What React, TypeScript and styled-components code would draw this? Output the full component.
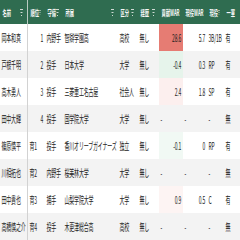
import styled, { createGlobalStyle } from "styled-components";

const GlobalStyle = createGlobalStyle`
    html, body {
        margin: 0;
        padding: 0;
        background: #fff;
        overflow: hidden;
    }
    body {
        font-family: "Noto Sans CJK JP", "Noto Sans", sans-serif;
    }
`;

// widths are drawn at 2x and squeezed back by the sheet's scaleX
const COLS = "56px 34px 36px 110px 40px 42px 48px 48px 34px 32px";

const Sheet = styled.div`
    width: 480px;
    transform: scaleX(0.5);
    transform-origin: 0 0;
`;

const HeaderRow = styled.div`
    display: grid;
    grid-template-columns: ${COLS};
    height: 24px;
    background: #2f6c50;
    color: #f7f7f7;
    font-size: 8.5px;
    font-weight: 700;
`;

const HeadCell = styled.div<{ $first?: boolean }>`
    display: flex;
    align-items: center;
    justify-content: space-between;
    padding: 0 8px 0 5px;
    overflow: hidden;
    white-space: nowrap;
    border-right: ${(p) => (p.$first ? "2px solid #b9cbc1" : "none")};
`;

const Row = styled.div<{ $even: boolean }>`
    display: grid;
    grid-template-columns: ${COLS};
    height: 27px;
    background: ${(p) => (p.$even ? "#f3f3f3" : "#fff")};
    color: #222;
    font-size: 10px;
    letter-spacing: -0.4px;
`;

const Cell = styled.div<{ $right?: boolean; $bg?: string; $first?: boolean }>`
    display: flex;
    align-items: center;
    justify-content: ${(p) => (p.$right ? "flex-end" : "flex-start")};
    padding: 0 4px 0 3px;
    overflow: hidden;
    white-space: nowrap;
    background: ${(p) => p.$bg || "transparent"};
    border-right: ${(p) => (p.$first ? "2px solid #d2d2d2" : "none")};
`;

const FilterIcon = () => (
    <svg width="6" height="8" viewBox="0 0 6 8">
        <rect x="0" y="1" width="6" height="1" fill="#cfd9d3" />
        <rect x="1" y="4" width="4" height="1" fill="#cfd9d3" />
        <rect x="2" y="7" width="2" height="1" fill="#cfd9d3" />
    </svg>
);

const headers = ["名前", "順位", "守備", "所属", "区分", "経歴", "貢献WAR", "現役WAR", "現役", "一軍"];

type Pick = {
    name: string;
    rank: number | string;
    pos: string;
    team: string;
    kind: string;
    career: string;
    war: number | "-";
    warColor?: string;
    activeWar: number | "-";
    role: string;
    first: string;
};

const picks: Pick[] = [
    { name: "岡本和真", rank: 1, pos: "内野手", team: "智辯学園高", kind: "高校", career: "無し", war: 28.6, warColor: "#e67c73", activeWar: 5.7, role: "3B/1B", first: "有" },
    { name: "戸根千明", rank: 2, pos: "投手", team: "日本大学", kind: "大学", career: "無し", war: -0.4, warColor: "#e6f4eb", activeWar: 0.3, role: "RP", first: "有" },
    { name: "高木勇人", rank: 3, pos: "投手", team: "三菱重工名古屋", kind: "社会人", career: "無し", war: 2.4, warColor: "#fcefee", activeWar: 1.8, role: "SP", first: "有" },
    { name: "田中大輝", rank: 4, pos: "投手", team: "国学院大学", kind: "大学", career: "無し", war: "-", activeWar: "-", role: "-", first: "無" },
    { name: "篠原慎平", rank: "育1", pos: "投手", team: "香川オリーブガイナーズ", kind: "独立", career: "無し", war: -0.1, warColor: "#f1f9f4", activeWar: 0, role: "RP", first: "有" },
    { name: "川相拓也", rank: "育2", pos: "内野手", team: "桜美林大学", kind: "大学", career: "無し", war: "-", activeWar: "-", role: "-", first: "無" },
    { name: "田中貴也", rank: "育3", pos: "捕手", team: "山梨学院大学", kind: "大学", career: "無し", war: 0.9, warColor: "#fdf4f3", activeWar: 0.5, role: "C", first: "有" },
    { name: "高橋慎之介", rank: "育4", pos: "投手", team: "木更津総合高", kind: "高校", career: "無し", war: "-", activeWar: "-", role: "-", first: "無" },
];

export default function App() {
    return (
        <>
            <GlobalStyle />
            <Sheet>
                <HeaderRow>
                    {headers.map((h, i) => (
                        <HeadCell key={h} $first={i === 0}>
                            <span>{h}</span>
                            {i < headers.length - 1 && <FilterIcon />}
                        </HeadCell>
                    ))}
                </HeaderRow>
                {picks.map((p, i) => (
                    <Row key={p.name} $even={i % 2 === 1}>
                        <Cell $first>{p.name}</Cell>
                        <Cell $right={typeof p.rank === "number"}>{p.rank}</Cell>
                        <Cell>{p.pos}</Cell>
                        <Cell>{p.team}</Cell>
                        <Cell>{p.kind}</Cell>
                        <Cell>{p.career}</Cell>
                        <Cell $right={p.war !== "-"} $bg={p.warColor}>
                            {p.war === "-" ? "-" : p.war.toFixed(1)}
                        </Cell>
                        <Cell $right={p.activeWar !== "-"}>
                            {p.activeWar === "-" ? "-" : p.activeWar === 0 ? "0" : p.activeWar.toFixed(1)}
                        </Cell>
                        <Cell>{p.role}</Cell>
                        <Cell>{p.first}</Cell>
                    </Row>
                ))}
            </Sheet>
        </>
    );
}
